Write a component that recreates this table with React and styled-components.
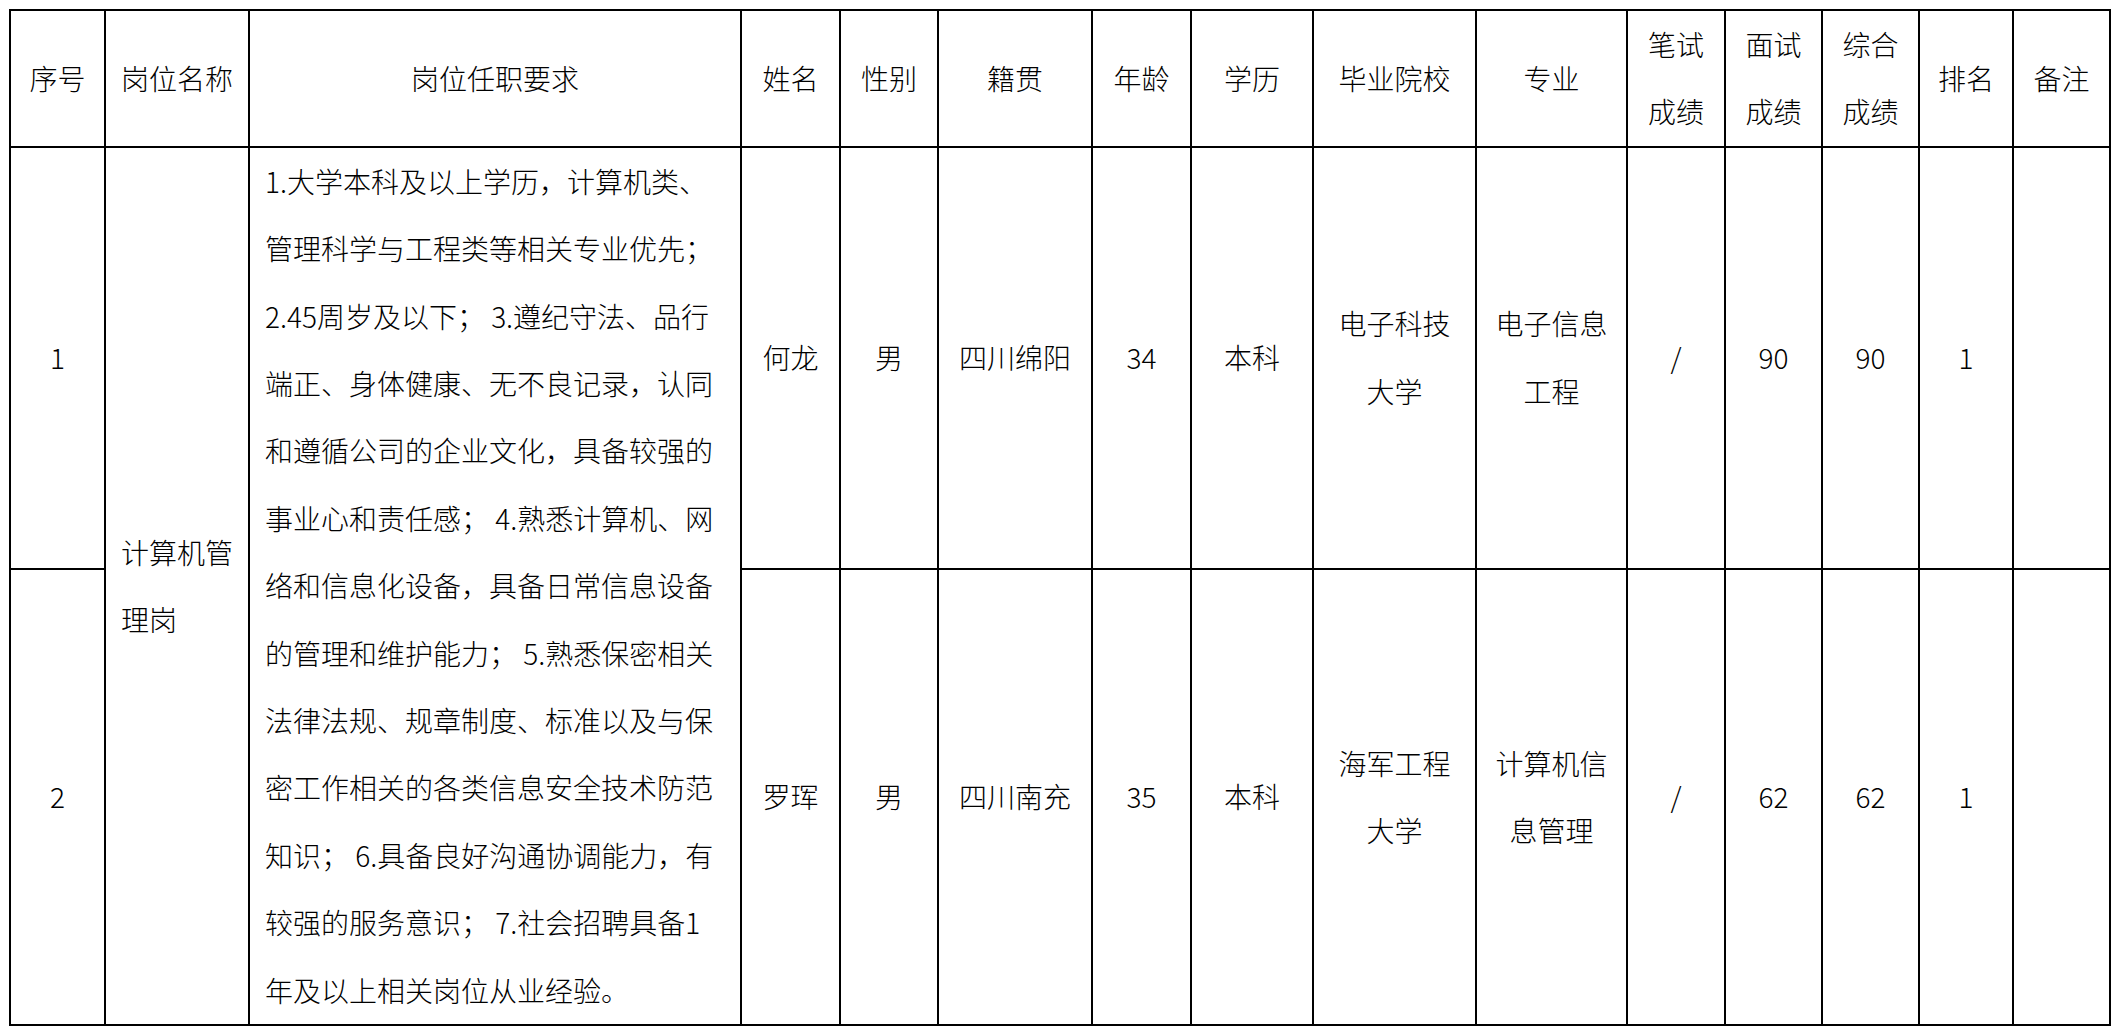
import React from "react";
import styled, { createGlobalStyle } from "styled-components";

const GlobalStyle = createGlobalStyle`
  html, body {
    margin: 0;
    padding: 0;
    background: #ffffff;
  }
  body {
    font-family: "Noto Sans CJK SC", sans-serif;
    color: #000000;
  }
`;

const COLS = [95, 144, 492, 99, 98, 154, 99, 122, 163, 151, 98, 97, 97, 94, 97];

const HEADERS = [
  ["序号"],
  ["岗位名称"],
  ["岗位任职要求"],
  ["姓名"],
  ["性别"],
  ["籍贯"],
  ["年龄"],
  ["学历"],
  ["毕业院校"],
  ["专业"],
  ["笔试", "成绩"],
  ["面试", "成绩"],
  ["综合", "成绩"],
  ["排名"],
  ["备注"],
];

const REQUIREMENTS = [
  "1.大学本科及以上学历，计算机类、",
  "管理科学与工程类等相关专业优先；",
  "2.45周岁及以下； 3.遵纪守法、品行",
  "端正、身体健康、无不良记录，认同",
  "和遵循公司的企业文化，具备较强的",
  "事业心和责任感； 4.熟悉计算机、网",
  "络和信息化设备，具备日常信息设备",
  "的管理和维护能力； 5.熟悉保密相关",
  "法律法规、规章制度、标准以及与保",
  "密工作相关的各类信息安全技术防范",
  "知识； 6.具备良好沟通协调能力，有",
  "较强的服务意识； 7.社会招聘具备1",
  "年及以上相关岗位从业经验。",
];

const PEOPLE = [
  {
    no: "1",
    height: 421,
    name: "何龙",
    sex: "男",
    origin: "四川绵阳",
    age: "34",
    edu: "本科",
    school: ["电子科技", "大学"],
    major: ["电子信息", "工程"],
    written: "/",
    interview: "90",
    total: "90",
    rank: "1",
    note: "",
  },
  {
    no: "2",
    height: 455,
    name: "罗珲",
    sex: "男",
    origin: "四川南充",
    age: "35",
    edu: "本科",
    school: ["海军工程", "大学"],
    major: ["计算机信", "息管理"],
    written: "/",
    interview: "62",
    total: "62",
    rank: "1",
    note: "",
  },
];

const Page = styled.div`
  padding: 9px 0 0 9px;
`;

const Table = styled.table`
  border-collapse: collapse;
  table-layout: fixed;
  width: 2100px;
  border: 2px solid #000;
  font-size: 28px;
  font-weight: 300;
  line-height: 67.4px;
`;

const HeadCell = styled.th`
  border: 2px solid #000;
  padding: 0 4px;
  font-weight: 300;
  text-align: center;
  vertical-align: middle;
  white-space: nowrap;
`;

const Row = styled.tr`
  height: ${(p) => p.$h}px;
`;

const Cell = styled.td`
  border: 2px solid #000;
  padding: ${(p) => (p.$left ? "0 8px 0 15px" : "0 4px")};
  text-align: ${(p) => (p.$left ? "left" : "center")};
  vertical-align: middle;
  white-space: nowrap;
`;

const Line = styled.div`
  white-space: nowrap;
`;

function Lines({ items }) {
  return items.map((t, i) => <Line key={i}>{t}</Line>);
}

export default function App() {
  return (
    <Page>
      <GlobalStyle />
      <Table>
        <colgroup>
          {COLS.map((w, i) => (
            <col key={i} style={{ width: w }} />
          ))}
        </colgroup>
        <thead>
          <tr>
            {HEADERS.map((h, i) => (
              <HeadCell key={i}>
                <Lines items={h} />
              </HeadCell>
            ))}
          </tr>
        </thead>
        <tbody>
          {PEOPLE.map((p, idx) => (
            <Row key={p.no} $h={p.height}>
              <Cell>{p.no}</Cell>
              {idx === 0 && (
                <>
                  <Cell $left rowSpan={2}>
                    <Lines items={["计算机管", "理岗"]} />
                  </Cell>
                  <Cell $left rowSpan={2}>
                    <Lines items={REQUIREMENTS} />
                  </Cell>
                </>
              )}
              <Cell>{p.name}</Cell>
              <Cell>{p.sex}</Cell>
              <Cell>{p.origin}</Cell>
              <Cell>{p.age}</Cell>
              <Cell>{p.edu}</Cell>
              <Cell>
                <Lines items={p.school} />
              </Cell>
              <Cell>
                <Lines items={p.major} />
              </Cell>
              <Cell>{p.written}</Cell>
              <Cell>{p.interview}</Cell>
              <Cell>{p.total}</Cell>
              <Cell>{p.rank}</Cell>
              <Cell>{p.note}</Cell>
            </Row>
          ))}
        </tbody>
      </Table>
    </Page>
  );
}
